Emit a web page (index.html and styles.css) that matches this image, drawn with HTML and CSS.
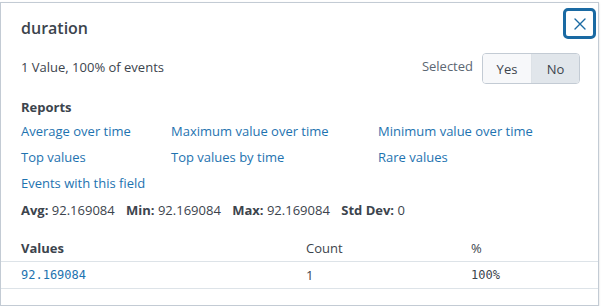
FILE: index.html
```html
<!DOCTYPE html>
<html lang="en">
<head>
  <meta charset="UTF-8" />
  <title>duration</title>
  <link rel="stylesheet" href="styles.css">
</head>
<body>

  <div class="panel">
    <!-- Header -->
    <div class="panel-head">
      <h2 class="title">duration</h2>
      <button class="close" aria-label="Close">
        <svg width="12" height="12" viewBox="0 0 12 12"><path d="M1 1L11 11M11 1L1 11" stroke="#1a6aa3" stroke-width="1.4" stroke-linecap="round"/></svg>
      </button>
    </div>

    <div class="summary">
      <span class="summary-text">1 Value, 100% of events</span>
      <div class="selected">
        <span class="selected-label">Selected</span>
        <div class="toggle">
          <button class="toggle-btn">Yes</button>
          <button class="toggle-btn active">No</button>
        </div>
      </div>
    </div>

    <!-- Reports -->
    <div class="reports">
      <h3>Reports</h3>
      <div class="report-grid">
        <a href="#">Average over time</a>
        <a href="#">Maximum value over time</a>
        <a href="#">Minimum value over time</a>
        <a href="#">Top values</a>
        <a href="#">Top values by time</a>
        <a href="#">Rare values</a>
        <a href="#">Events with this field</a>
      </div>
      <p class="stats">
        <span><b>Avg:</b> 92.169084</span>
        <span><b>Min:</b> 92.169084</span>
        <span><b>Max:</b> 92.169084</span>
        <span><b>Std Dev:</b> 0</span>
      </p>
    </div>

    <!-- Values table -->
    <table class="values">
      <thead>
        <tr>
          <th class="col-value">Values</th>
          <th class="col-count">Count</th>
          <th class="col-pct">%</th>
        </tr>
      </thead>
      <tbody>
        <tr>
          <td class="mono link">92.169084</td>
          <td>1</td>
          <td class="mono">100%</td>
        </tr>
      </tbody>
    </table>
  </div>

</body>
</html>
```

FILE: styles.css
```css
body {
  margin: 0;
  padding-top: 2px;
  background: #fff;
  font-family: "Open Sans", sans-serif;
  color: #3c444d;
}

.panel {
  position: relative;
  width: 599px;
  height: 304px;
  box-sizing: border-box;
  border: 1px solid #c3cbd4;
  box-shadow: 0 1px 2px rgba(0,0,0,0.15);
  background: #fff;
}

.panel-head {
  padding: 15px 20px 0;
  height: 29px;
}

.title {
  margin: 0;
  font-size: 16px;
  font-weight: 600;
  line-height: 20px;
  color: #3c444d;
}

.close {
  position: absolute;
  top: 5px;
  right: 2px;
  width: 33px;
  height: 31px;
  padding: 0;
  border: 3px solid #1a6aa3;
  border-radius: 5px;
  background: #fff;
  display: flex;
  align-items: center;
  justify-content: center;
  cursor: pointer;
}

.summary {
  display: flex;
  align-items: center;
  justify-content: space-between;
  padding: 0 18px 0 20px;
  height: 31px;
  margin-top: 6px;
  font-size: 13px;
}

.summary-text {
  margin-top: -3px;
}

.selected {
  display: flex;
  align-items: center;
  gap: 9px;
}

.selected-label {
  color: #5c6773;
  margin-top: -6px;
}

.toggle {
  display: flex;
  border: 1px solid #c3cbd4;
  border-radius: 4px;
  overflow: hidden;
}

.toggle-btn {
  font-family: inherit;
  font-size: 13px;
  color: #3c444d;
  border: none;
  background: #f7f8fa;
  width: 48px;
  height: 29px;
  padding: 0;
  cursor: pointer;
}

.toggle-btn + .toggle-btn {
  border-left: 1px solid #dde2e7;
}

.toggle-btn.active {
  background: #e1e6eb;
}

.reports {
  padding: 0 20px;
  font-size: 13px;
}

.reports h3 {
  margin: 15px 0 0;
  font-size: 13px;
  font-weight: 700;
  line-height: 16px;
}

.report-grid {
  display: grid;
  grid-template-columns: 150px 207px auto;
  row-gap: 10px;
  margin-top: 8px;
}

.report-grid a,
.link {
  color: #1e73b0;
  text-decoration: none;
  line-height: 16px;
}

.stats {
  margin: 11px 0 0;
  line-height: 16px;
}

.stats span {
  margin-right: 8px;
}

.stats b {
  font-weight: 700;
}

.values {
  width: 100%;
  margin-top: 17px;
  border-collapse: collapse;
  font-size: 13px;
}

.values th {
  text-align: left;
  font-weight: 400;
  height: 25px;
  padding: 0 0 1px;
  vertical-align: middle;
  border-bottom: 1px solid #dde3e8;
}

.values th.col-value {
  font-weight: 700;
  padding-left: 20px;
  width: 285px;
}

.values th.col-count {
  width: 165px;
}

.values td {
  height: 25px;
  padding: 0 0 1px;
  border-bottom: 1px solid #dde3e8;
}

.values td:first-child {
  padding-left: 20px;
}

.mono {
  font-family: "DejaVu Sans Mono", monospace;
  font-size: 12px;
}
```
